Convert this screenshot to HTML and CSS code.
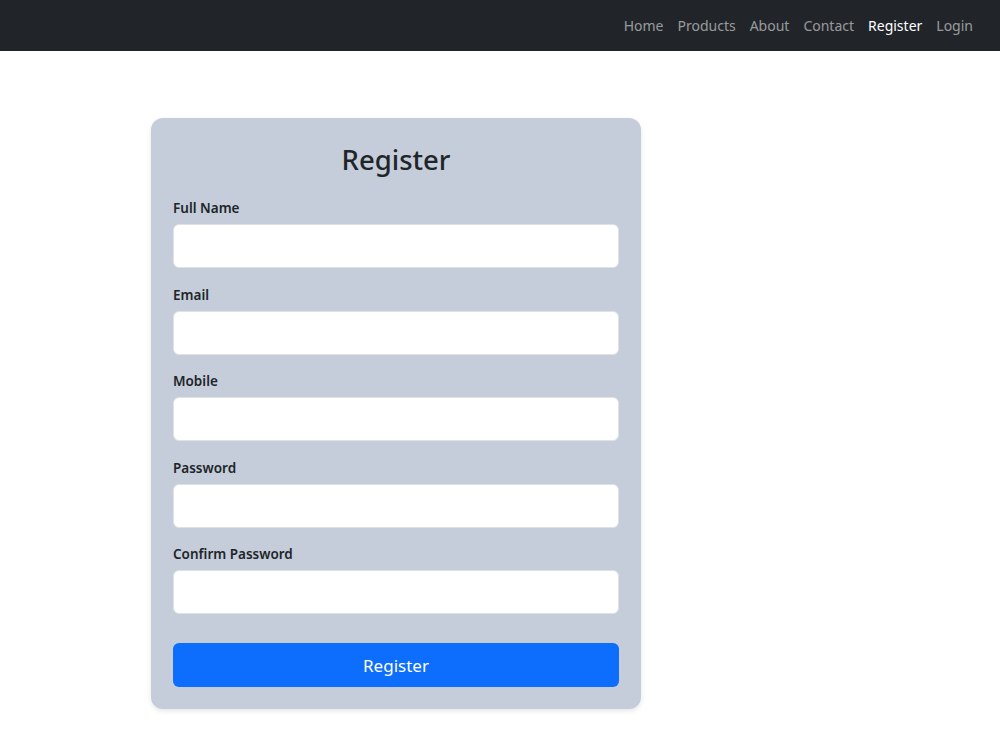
FILE: index.html
```html
<!DOCTYPE html>
<html lang="en">
<head>
    <meta charset="UTF-8">
    <meta name="viewport" content="width=device-width, initial-scale=1.0">
    <title>Register</title>
    <link rel="stylesheet" href="styles.css">
</head>
<body>
    <nav class="navbar">
        <ul class="nav-links">
            <li><a href="#" class="nav-link">Home</a></li>
            <li><a href="#" class="nav-link">Products</a></li>
            <li><a href="#" class="nav-link">About</a></li>
            <li><a href="#" class="nav-link">Contact</a></li>
            <li><a href="#" class="nav-link active">Register</a></li>
            <li><a href="#" class="nav-link">Login</a></li>
        </ul>
    </nav>

    <main class="page">
        <div class="card">
            <h2 class="card-title">Register</h2>
            <form>
                <div class="field">
                    <label for="fullName">Full Name</label>
                    <input type="text" id="fullName" class="input-field">
                </div>
                <div class="field">
                    <label for="email">Email</label>
                    <input type="email" id="email" class="input-field">
                </div>
                <div class="field">
                    <label for="mobile">Mobile</label>
                    <input type="text" id="mobile" class="input-field">
                </div>
                <div class="field">
                    <label for="password">Password</label>
                    <input type="password" id="password" class="input-field">
                </div>
                <div class="field field-last">
                    <label for="confirmPassword">Confirm Password</label>
                    <input type="password" id="confirmPassword" class="input-field">
                </div>
                <button type="submit" class="btn-submit">Register</button>
            </form>
        </div>
    </main>
</body>
</html>
```

FILE: styles.css
```css
body {
    margin: 0;
    font-family: "Noto Sans", "Open Sans", sans-serif;
    background-color: #fff;
    color: #212529;
}

.navbar {
    height: 51px;
    background-color: #212529;
    display: flex;
    justify-content: flex-end;
    align-items: center;
    padding: 0 20px;
}

.nav-links {
    list-style: none;
    margin: 0;
    padding: 0;
    display: flex;
}

.nav-link {
    display: block;
    padding: 4px 7px;
    font-size: 14px;
    color: rgba(255, 255, 255, 0.55);
    text-decoration: none;
}

.nav-link.active {
    color: #fff;
}

.page {
    padding: 67px 0 40px 151px;
}

.card {
    width: 446px;
    padding: 22px;
    background-color: #c4cdd9;
    border-radius: 12px;
    box-shadow: 0 2px 5px rgba(0, 0, 0, 0.1);
}

.card-title {
    margin: 0 0 18px;
    text-align: center;
    font-size: 27.5px;
    font-weight: 500;
    line-height: 40px;
}

.field {
    margin-bottom: 16.5px;
}

.field label {
    display: block;
    font-size: 13.5px;
    font-weight: 600;
    line-height: 20px;
    margin-bottom: 6px;
}

.field-last {
    margin-bottom: 29px;
}

.input-field {
    display: block;
    width: 100%;
    height: 44px;
    box-sizing: border-box;
    border: 1px solid #dee2e6;
    border-radius: 6px;
    background-color: #fff;
    padding: 6px 12px;
    font-size: 15px;
    font-family: inherit;
}

.btn-submit {
    display: block;
    width: 100%;
    height: 44px;
    border: none;
    border-radius: 6px;
    background-color: #0d6efd;
    color: #fff;
    font-size: 17px;
    font-family: inherit;
}
```
